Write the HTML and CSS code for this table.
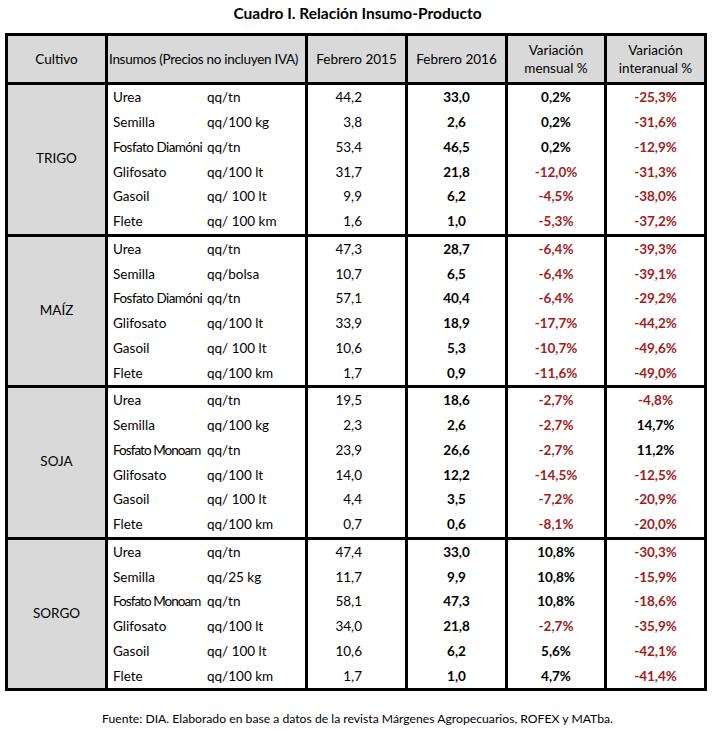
FILE: index.html
```html
<!DOCTYPE html>
<html lang="es">
<head>
<meta charset="utf-8">
<title>Cuadro I. Relación Insumo-Producto</title>
<link rel="stylesheet" href="styles.css">
</head>
<body>
<h1 class="title">Cuadro I. Relación Insumo-Producto</h1>
<table class="tbl">
  <colgroup>
    <col class="c1"><col class="c2"><col class="c3"><col class="c4"><col class="c5"><col class="c6">
  </colgroup>
  <thead>
    <tr class="hdr">
      <th class="crop">Cultivo</th>
      <th class="hins">Insumos (Precios no incluyen IVA)</th>
      <th>Febrero 2015</th>
      <th>Febrero 2016</th>
      <th>Variación<br>mensual %</th>
      <th>Variación<br>interanual %</th>
    </tr>
  </thead>
  <tbody class="grp">
    <tr><td class="crop" rowspan="6">TRIGO</td><td class="ins"><span class="nm">Urea</span><span>qq/tn</span></td><td class="v15">44,2</td><td class="v16">33,0</td><td class="pct">0,2%</td><td class="pct neg">-25,3%</td></tr>
    <tr><td class="ins"><span class="nm">Semilla</span><span>qq/100 kg</span></td><td class="v15">3,8</td><td class="v16">2,6</td><td class="pct">0,2%</td><td class="pct neg">-31,6%</td></tr>
    <tr><td class="ins"><span class="nm tight">Fosfato Diamóni</span><span>qq/tn</span></td><td class="v15">53,4</td><td class="v16">46,5</td><td class="pct">0,2%</td><td class="pct neg">-12,9%</td></tr>
    <tr><td class="ins"><span class="nm">Glifosato</span><span>qq/100 lt</span></td><td class="v15">31,7</td><td class="v16">21,8</td><td class="pct neg">-12,0%</td><td class="pct neg">-31,3%</td></tr>
    <tr><td class="ins"><span class="nm">Gasoil</span><span>qq/ 100 lt</span></td><td class="v15">9,9</td><td class="v16">6,2</td><td class="pct neg">-4,5%</td><td class="pct neg">-38,0%</td></tr>
    <tr><td class="ins"><span class="nm">Flete</span><span>qq/ 100 km</span></td><td class="v15">1,6</td><td class="v16">1,0</td><td class="pct neg">-5,3%</td><td class="pct neg">-37,2%</td></tr>
  </tbody>
  <tbody class="grp">
    <tr><td class="crop" rowspan="6">MAÍZ</td><td class="ins"><span class="nm">Urea</span><span>qq/tn</span></td><td class="v15">47,3</td><td class="v16">28,7</td><td class="pct neg">-6,4%</td><td class="pct neg">-39,3%</td></tr>
    <tr><td class="ins"><span class="nm">Semilla</span><span>qq/bolsa</span></td><td class="v15">10,7</td><td class="v16">6,5</td><td class="pct neg">-6,4%</td><td class="pct neg">-39,1%</td></tr>
    <tr><td class="ins"><span class="nm tight">Fosfato Diamóni</span><span>qq/tn</span></td><td class="v15">57,1</td><td class="v16">40,4</td><td class="pct neg">-6,4%</td><td class="pct neg">-29,2%</td></tr>
    <tr><td class="ins"><span class="nm">Glifosato</span><span>qq/100 lt</span></td><td class="v15">33,9</td><td class="v16">18,9</td><td class="pct neg">-17,7%</td><td class="pct neg">-44,2%</td></tr>
    <tr><td class="ins"><span class="nm">Gasoil</span><span>qq/ 100 lt</span></td><td class="v15">10,6</td><td class="v16">5,3</td><td class="pct neg">-10,7%</td><td class="pct neg">-49,6%</td></tr>
    <tr><td class="ins"><span class="nm">Flete</span><span>qq/100 km</span></td><td class="v15">1,7</td><td class="v16">0,9</td><td class="pct neg">-11,6%</td><td class="pct neg">-49,0%</td></tr>
  </tbody>
  <tbody class="grp">
    <tr><td class="crop" rowspan="6">SOJA</td><td class="ins"><span class="nm">Urea</span><span>qq/tn</span></td><td class="v15">19,5</td><td class="v16">18,6</td><td class="pct neg">-2,7%</td><td class="pct neg">-4,8%</td></tr>
    <tr><td class="ins"><span class="nm">Semilla</span><span>qq/100 kg</span></td><td class="v15">2,3</td><td class="v16">2,6</td><td class="pct neg">-2,7%</td><td class="pct">14,7%</td></tr>
    <tr><td class="ins"><span class="nm tighter">Fosfato Monoam</span><span>qq/tn</span></td><td class="v15">23,9</td><td class="v16">26,6</td><td class="pct neg">-2,7%</td><td class="pct">11,2%</td></tr>
    <tr><td class="ins"><span class="nm">Glifosato</span><span>qq/100 lt</span></td><td class="v15">14,0</td><td class="v16">12,2</td><td class="pct neg">-14,5%</td><td class="pct neg">-12,5%</td></tr>
    <tr><td class="ins"><span class="nm">Gasoil</span><span>qq/ 100 lt</span></td><td class="v15">4,4</td><td class="v16">3,5</td><td class="pct neg">-7,2%</td><td class="pct neg">-20,9%</td></tr>
    <tr><td class="ins"><span class="nm">Flete</span><span>qq/100 km</span></td><td class="v15">0,7</td><td class="v16">0,6</td><td class="pct neg">-8,1%</td><td class="pct neg">-20,0%</td></tr>
  </tbody>
  <tbody class="grp">
    <tr><td class="crop" rowspan="6">SORGO</td><td class="ins"><span class="nm">Urea</span><span>qq/tn</span></td><td class="v15">47,4</td><td class="v16">33,0</td><td class="pct">10,8%</td><td class="pct neg">-30,3%</td></tr>
    <tr><td class="ins"><span class="nm">Semilla</span><span>qq/25 kg</span></td><td class="v15">11,7</td><td class="v16">9,9</td><td class="pct">10,8%</td><td class="pct neg">-15,9%</td></tr>
    <tr><td class="ins"><span class="nm tighter">Fosfato Monoam</span><span>qq/tn</span></td><td class="v15">58,1</td><td class="v16">47,3</td><td class="pct">10,8%</td><td class="pct neg">-18,6%</td></tr>
    <tr><td class="ins"><span class="nm">Glifosato</span><span>qq/100 lt</span></td><td class="v15">34,0</td><td class="v16">21,8</td><td class="pct neg">-2,7%</td><td class="pct neg">-35,9%</td></tr>
    <tr><td class="ins"><span class="nm">Gasoil</span><span>qq/ 100 lt</span></td><td class="v15">10,6</td><td class="v16">6,2</td><td class="pct">5,6%</td><td class="pct neg">-42,1%</td></tr>
    <tr><td class="ins"><span class="nm">Flete</span><span>qq/100 km</span></td><td class="v15">1,7</td><td class="v16">1,0</td><td class="pct">4,7%</td><td class="pct neg">-41,4%</td></tr>
  </tbody>
</table>
<p class="source">Fuente: DIA. Elaborado en base a datos de la revista Márgenes Agropecuarios, ROFEX y MATba.</p>
</body>
</html>
```

FILE: styles.css
```css
html, body {
  margin: 0;
  padding: 0;
  background: #fff;
}
body {
  font-family: Lato, "Open Sans", "Liberation Sans", sans-serif;
  color: #000;
  width: 715px;
}
.title {
  margin: 0;
  height: 33px;
  line-height: 27px;
  font-size: 15.5px;
  font-weight: 700;
  text-align: center;
}
.tbl {
  margin-left: 5px;
  width: 702px;
  border: 3px solid #000;
  border-spacing: 0;
  table-layout: fixed;
  font-size: 13.5px;
}
.c1 { width: 97px; }
.c2 { width: 200px; }
.c3 { width: 100px; }
.c4 { width: 100px; }
.c5 { width: 99px; }
.c6 { width: 100px; }
.tbl th, .tbl td {
  padding: 0;
  border-left: 3px solid #000;
  white-space: nowrap;
}
.tbl th:first-child, .tbl td.crop {
  border-left: 0;
}
.hdr th {
  height: 46px;
  background: #d9d9d9;
  font-weight: 400;
  text-align: center;
  line-height: 18px;
}
.hdr th.hins {
  text-align: left;
  padding-left: 1px;
  letter-spacing: -0.3px;
}
.grp tr {
  height: 24.75px;
}
.grp tr:first-child {
  height: 27.75px;
}
.grp tr:first-child td {
  border-top: 3px solid #000;
}
.grp td.crop {
  background: #d9d9d9;
  text-align: center;
  vertical-align: middle;
  padding-bottom: 2px;
}
.tbl td.ins {
  padding-left: 5px;
}
.nm {
  display: inline-block;
  width: 94px;
  vertical-align: top;
}
.tight {
  letter-spacing: -0.55px;
}
.tighter {
  letter-spacing: -0.95px;
}
.tbl td.v15 {
  text-align: right;
  padding-right: 43px;
}
.v16, .pct {
  text-align: center;
  font-weight: 700;
}
.neg {
  color: #a11d21;
}
.source {
  margin: 20px 0 0;
  text-align: center;
  font-size: 12.2px;
  line-height: 16px;
}
```
